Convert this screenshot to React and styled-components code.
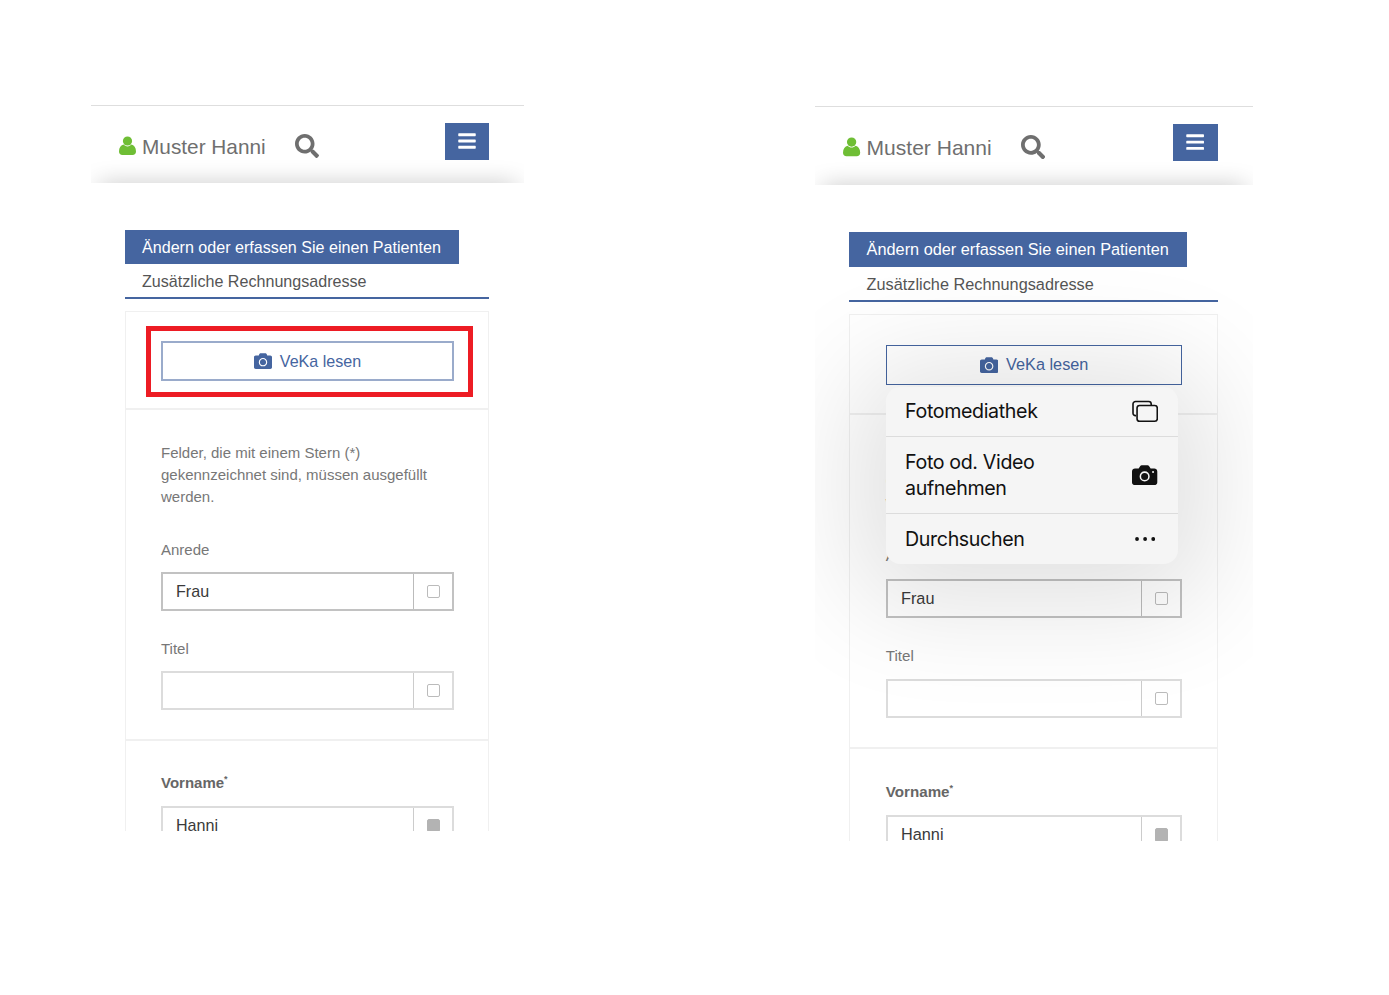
import React from "react";
import styled, { createGlobalStyle } from "styled-components";
import { FaBars, FaCamera, FaSearch } from "react-icons/fa";

const blue = "#4565a0";

const GlobalStyle = createGlobalStyle`
  body {
    margin: 0;
    background: #fff;
    font-family: "Liberation Sans", Arial, sans-serif;
  }
`;

function UserIcon() {
  return (
    <svg width="17" height="19" viewBox="0 0 17 19">
      <circle cx="8.5" cy="5" r="4.6" fill="#6fbe35" />
      <path d="M0 15.5C0 11.5 2 9.2 4.6 8.6c1 1.2 2.4 1.8 3.9 1.8s2.9-.6 3.9-1.8C15 9.2 17 11.5 17 15.5 17 17.6 15.6 19 13.6 19H3.4C1.4 19 0 17.6 0 15.5z" fill="#6fbe35" />
    </svg>
  );
}

function LibraryIcon() {
  return (
    <svg width="26" height="22" viewBox="0 0 26 22" fill="none" stroke="#111" strokeWidth="1.6">
      <path d="M4 15.5H3.5A2.5 2.5 0 0 1 1 13V4a2.5 2.5 0 0 1 2.5-2.5h13A2.5 2.5 0 0 1 19 4v1" />
      <rect x="5" y="5.5" width="20" height="15.5" rx="2.5" />
    </svg>
  );
}

function PhotoIcon() {
  return (
    <svg width="25" height="20" viewBox="0 0 25 20">
      <path fillRule="evenodd" fill="#111" d="M3 3.5h3.6L8.2.9C8.5.4 9 .2 9.600.2h5.800c.6 0 1.100.2 1.400.7l1.600 2.600H22c1.700 0 3 1.300 3 3V17c0 1.700-1.300 3-3 3H3c-1.700 0-3-1.300-3-3V6.500c0-1.700 1.300-3 3-3zM12.500 16.300a5 5 0 1 0 0-10 5 5 0 0 0 0 10zm0-1.500a3.500 3.500 0 1 1 0-7 3.500 3.500 0 0 1 0 7zM20.800 8a1 1 0 1 0 0-2 1 1 0 0 0 0 2z" />
    </svg>
  );
}

function DotsIcon() {
  return (
    <svg width="20" height="4" viewBox="0 0 20 4" fill="#111">
      <circle cx="2" cy="2" r="1.900" />
      <circle cx="10" cy="2" r="1.900" />
      <circle cx="18" cy="2" r="1.900" />
    </svg>
  );
}

const menuItems = [
  { label: "Fotomediathek", icon: <LibraryIcon />, height: 48 },
  { label: <>Foto od. Video<br />aufnehmen</>, icon: <PhotoIcon />, height: 76 },
  { label: "Durchsuchen", icon: <DotsIcon />, height: 51 },
];

function Field({ value, strong, filled }) {
  return (
    <FieldBox $strong={strong}>
      <FieldValue>{value}</FieldValue>
      <FieldCheck $strong={strong}>
        <CheckBox $filled={filled} />
      </FieldCheck>
    </FieldBox>
  );
}

function PatientScreen({ zoom, lift, marked, menuOpen }) {
  return (
    <Screen $zoom={zoom} $lift={lift}>
      <Header>
        <UserName>
          <UserIcon />
          Muster Hanni
        </UserName>
        <SearchButton><FaSearch size={24} /></SearchButton>
        <MenuButton><FaBars size={20} /></MenuButton>
      </Header>
      <Content>
        <ActiveTab>Ändern oder erfassen Sie einen Patienten</ActiveTab>
        <SecondTab>Zusätzliche Rechnungsadresse</SecondTab>
        <Card>
          <ReadSection>
            <ReadFrame $marked={marked}>
              <ReadButton $marked={marked}>
                <FaCamera size={18} />
                VeKa lesen
              </ReadButton>
            </ReadFrame>
          </ReadSection>
          <FormSection>
            <Hint>
              Felder, die mit einem Stern (*) gekennzeichnet sind, müssen ausgefüllt werden.
            </Hint>
            <Label $gap={31}>Anrede</Label>
            <Field value="Frau" strong />
            <Label $gap={27}>Titel</Label>
            <Field />
          </FormSection>
          <NameSection>
            <Label $bold>Vorname<sup>*</sup></Label>
            <Field value="Hanni" filled />
          </NameSection>
        </Card>
      </Content>
      {menuOpen && (
        <PickerMenu>
          {menuItems.map((item, i) => (
            <PickerRow key={i} $height={item.height}>
              <span>{item.label}</span>
              <PickerIcon>{item.icon}</PickerIcon>
            </PickerRow>
          ))}
        </PickerMenu>
      )}
    </Screen>
  );
}

export default function App() {
  return (
    <>
      <GlobalStyle />
      <Page>
        <PatientScreen zoom={1} marked />
        <PatientScreen zoom={1.012} lift={1} menuOpen />
      </Page>
    </>
  );
}

const Page = styled.div`
  min-height: 995px;
  box-sizing: border-box;
  padding: 105px 0 0 91px;
  display: flex;
  align-items: flex-start;
  gap: 291px;
`;

const Screen = styled.div`
  position: relative;
  width: 433px;
  height: 726px;
  flex: none;
  overflow: hidden;
  border-top: 1px solid #dedede;
  box-sizing: border-box;
  zoom: ${(p) => p.$zoom};
  margin-top: ${(p) => p.$lift || 0}px;
`;

const Header = styled.div`
  position: relative;
  height: 77px;
  box-sizing: border-box;
  overflow: hidden;
  display: flex;
  align-items: center;
  padding: 2px 35px 0 28px;

  &::after {
    content: "";
    position: absolute;
    left: 8px;
    right: 8px;
    top: calc(100% + 4px);
    height: 10px;
    box-shadow: 0 0 24px rgba(0, 0, 0, 0.4);
  }
`;

const UserName = styled.div`
  display: flex;
  align-items: center;
  gap: 6px;
  margin-top: 2px;
  font-size: 20.8px;
  color: #6f6f6f;

  svg {
    margin-top: -2px;
  }
`;

const SearchButton = styled.div`
  display: flex;
  margin-left: 29px;
  color: #6f6f6f;
`;

const MenuButton = styled.div`
  width: 44px;
  height: 37px;
  margin: -9px 0 0 auto;
  display: flex;
  align-items: center;
  justify-content: center;
  background: ${blue};
  color: #fff;
`;

const Content = styled.div`
  padding: 47px 35px 0 34px;
`;

const ActiveTab = styled.div`
  width: 334px;
  height: 34px;
  box-sizing: border-box;
  padding-left: 17px;
  display: flex;
  align-items: center;
  background: ${blue};
  color: #fff;
  font-size: 16.1px;
`;

const SecondTab = styled.div`
  height: 32px;
  padding: 1px 0 0 17px;
  display: flex;
  align-items: center;
  border-bottom: 2px solid ${blue};
  color: #555;
  font-size: 16.1px;
`;

const Card = styled.div`
  margin-top: 12px;
  border: 1px solid #f0f0f0;
  border-bottom: none;
`;

const ReadSection = styled.div`
  height: 98px;
  box-sizing: border-box;
  padding: 14px 15px 0 20px;
  border-bottom: 2px solid #f0f0f0;
`;

const ReadFrame = styled.div`
  padding: 10px 14px 11px 10px;
  border: 5px solid ${(p) => (p.$marked ? "#ed1c24" : "transparent")};
`;

const ReadButton = styled.div`
  height: 40px;
  box-sizing: border-box;
  display: flex;
  align-items: center;
  justify-content: center;
  gap: 8px;
  border: ${(p) => (p.$marked ? "2px solid #9aabcb" : `1px solid ${blue}`)};
  color: ${blue};
  font-size: 16.1px;
`;

const FormSection = styled.div`
  padding: 32px 34px 29px 35px;
  border-bottom: 2px solid #f0f0f0;
`;

const NameSection = styled.div`
  padding: 31px 34px 0 35px;
`;

const Hint = styled.div`
  font-size: 15px;
  line-height: 22px;
  color: #777;
`;

const Label = styled.div`
  margin: ${(p) => p.$gap || 0}px 0 ${(p) => (p.$bold ? 12 : 11)}px;
  font-size: 15px;
  line-height: 22px;
  font-weight: ${(p) => (p.$bold ? 700 : 400)};
  color: ${(p) => (p.$bold ? "#666" : "#777")};

  sup {
    font-size: 9px;
    line-height: 0;
  }
`;

const FieldBox = styled.div`
  height: 39px;
  box-sizing: border-box;
  display: flex;
  border: 2px solid ${(p) => (p.$strong ? "#c2c2c2" : "#dcdcdc")};
`;

const FieldValue = styled.div`
  flex: 1;
  padding-left: 13px;
  line-height: 35px;
  font-size: 16.1px;
  color: #3a3a3a;
`;

const FieldCheck = styled.div`
  width: 38px;
  display: flex;
  align-items: center;
  justify-content: center;
  border-left: 1px solid ${(p) => (p.$strong ? "#bbb" : "#ccc")};
`;

const CheckBox = styled.div`
  width: 13px;
  height: 13px;
  box-sizing: border-box;
  border-radius: 2px;
  border: 1px solid ${(p) => (p.$filled ? "#b3b3b3" : "#bbb")};
  background: ${(p) => (p.$filled ? "#b3b3b3" : "#fff")};
`;

const PickerMenu = styled.div`
  position: absolute;
  left: 70px;
  top: 277px;
  width: 289px;
  border-radius: 14px;
  background: #f5f5f5;
  box-shadow: 0 10px 110px 30px rgba(0, 0, 0, 0.12);
  font-family: Inter, "Liberation Sans", sans-serif;
  font-size: 19.4px;
  letter-spacing: -0.36px;
  line-height: 26px;
  color: #111;
`;

const PickerRow = styled.div`
  height: ${(p) => p.$height}px;
  box-sizing: border-box;
  padding: 0 20px 0 19px;
  display: flex;
  align-items: center;
  justify-content: space-between;

  & + & {
    border-top: 1px solid #dcdcdc;
  }
`;

const PickerIcon = styled.div`
  width: 26px;
  display: flex;
  justify-content: center;
`;
